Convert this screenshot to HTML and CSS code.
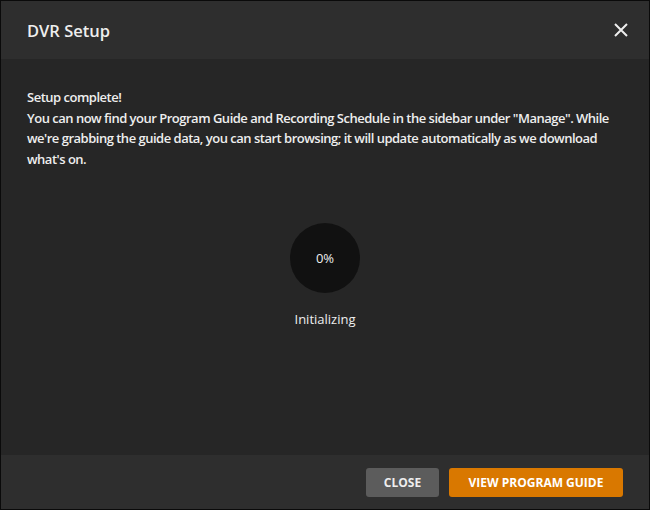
FILE: index.html
```html
<!DOCTYPE html>
<html lang="en">
<head>
<meta charset="UTF-8">
<title>DVR Setup</title>
<link rel="stylesheet" href="styles.css">
</head>
<body>

<div class="modal">
  <div class="modal-header">
    <h1 class="modal-title">DVR Setup</h1>
    <button class="close-x" aria-label="Close">
      <svg width="14" height="14" viewBox="0 0 14 14">
        <path d="M1 1L13 13M13 1L1 13" stroke="#eee" stroke-width="2" fill="none"/>
      </svg>
    </button>
  </div>

  <div class="modal-body">
    <p class="message">
      Setup complete!<br>
      You can now find your Program Guide and Recording Schedule in the sidebar under "Manage". While we're grabbing the guide data, you can start browsing; it will update automatically as we download what's on.
    </p>

    <div class="progress">
      <div class="progress-circle">0%</div>
      <div class="progress-label">Initializing</div>
    </div>
  </div>

  <div class="modal-footer">
    <button class="btn btn-default">Close</button>
    <button class="btn btn-primary">View Program Guide</button>
  </div>
</div>

</body>
</html>
```

FILE: styles.css
```css
html, body {
  margin: 0;
  padding: 0;
  background-color: #000;
}
body {
  font-family: "Open Sans", sans-serif;
  color: #eee;
}
.modal {
  width: 650px;
  height: 510px;
  box-sizing: border-box;
  border: 1px solid #0a0a0a;
  background-color: #262626;
  display: flex;
  flex-direction: column;
}
.modal-header {
  height: 58px;
  background-color: #2e2e2e;
  display: flex;
  align-items: center;
  justify-content: space-between;
  padding: 0 21px 0 26px;
}
.modal-title {
  margin: 0;
  font-size: 16.5px;
  font-weight: 600;
  color: #eee;
}
.close-x {
  background: none;
  border: none;
  padding: 0;
  width: 14px;
  height: 14px;
  cursor: pointer;
  display: flex;
}
.modal-body {
  flex: 1;
  padding: 28px 26px 0 26px;
}
.message {
  margin: 0;
  font-size: 13px;
  font-weight: 600;
  letter-spacing: -0.5px;
  line-height: 20.5px;
  color: #eee;
}
.progress {
  display: flex;
  flex-direction: column;
  align-items: center;
  margin-top: 54px;
}
.progress-circle {
  width: 70px;
  height: 70px;
  border-radius: 50%;
  background-color: #111;
  display: flex;
  align-items: center;
  justify-content: center;
  font-size: 13px;
  color: #eee;
}
.progress-label {
  margin-top: 17px;
  font-size: 13px;
  font-weight: 500;
  color: #eee;
}
.modal-footer {
  height: 54px;
  background-color: #2e2e2e;
  display: flex;
  align-items: center;
  justify-content: flex-end;
  gap: 10px;
  padding: 0 26px;
}
.btn {
  height: 29px;
  border: none;
  border-radius: 3px;
  font-family: "Open Sans", sans-serif;
  font-size: 12px;
  font-weight: 700;
  text-transform: uppercase;
  color: #eee;
  cursor: pointer;
}
.btn-default {
  width: 73px;
  background-color: #5c5c5c;
}
.btn-primary {
  width: 174px;
  background-color: #d97800;
  color: #fff;
}
```
